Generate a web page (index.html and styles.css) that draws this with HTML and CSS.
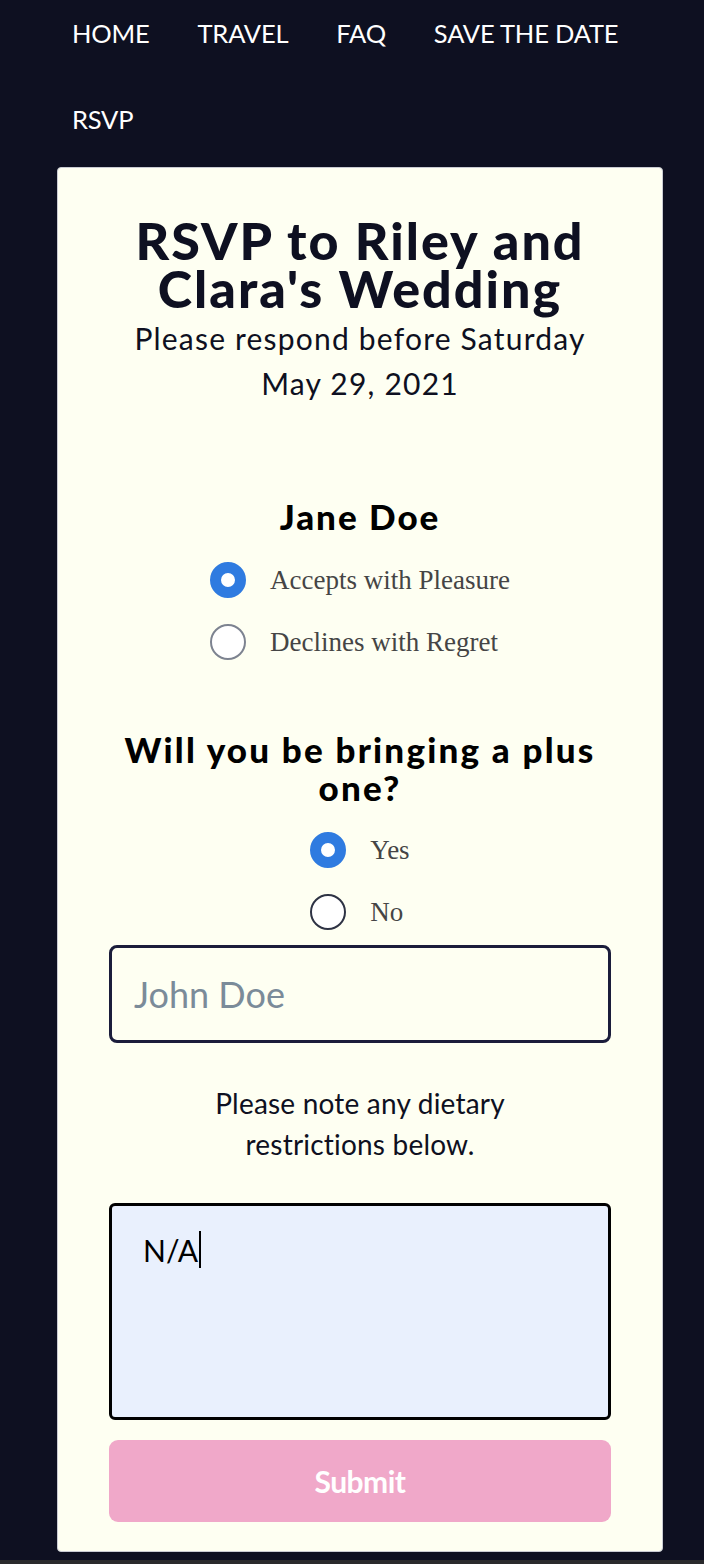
FILE: index.html
```html
<!DOCTYPE html>
<html>
<head>
<meta charset="utf-8">
<link rel="stylesheet" href="styles.css">
</head>
<body>
<nav class="nav">
  <ul class="nav-list">
    <li><a href="#">HOME</a></li>
    <li><a href="#">TRAVEL</a></li>
    <li><a href="#">FAQ</a></li>
    <li><a href="#">SAVE THE DATE</a></li>
    <li><a href="#">RSVP</a></li>
  </ul>
</nav>
<main class="card">
  <h1 class="title">RSVP to Riley and Clara's Wedding</h1>
  <p class="subtitle">Please respond before Saturday May 29, 2021</p>

  <section class="guest">
    <h2 class="guest-name">Jane Doe</h2>
    <div class="options">
      <label class="option"><input type="radio" name="jane" class="radio" checked><span class="opt-text">Accepts with Pleasure</span></label>
      <label class="option"><input type="radio" name="jane" class="radio radio-gray"><span class="opt-text">Declines with Regret</span></label>
    </div>
  </section>

  <section class="guest plus">
    <h2 class="question">Will you be bringing a plus one?</h2>
    <div class="options">
      <label class="option"><input type="radio" name="plus" class="radio" checked><span class="opt-text">Yes</span></label>
      <label class="option"><input type="radio" name="plus" class="radio radio-dark"><span class="opt-text">No</span></label>
    </div>
  </section>

  <input type="text" class="text-input" placeholder="John Doe">

  <p class="diet-label">Please note any dietary restrictions below.</p>

  <div class="textarea"><span class="ta-text">N/A</span><span class="caret"></span></div>

  <button class="submit" type="button">Submit</button>
</main>
</body>
</html>
```
FILE: styles.css
```css
html {
  background: #2a2a2c;
}
body {
  margin: 0;
  background: #0e1021;
  font-family: Lato, "Liberation Sans", sans-serif;
  padding-bottom: 8px;
}
.nav-list {
  list-style: none;
  margin: 0;
  padding: 0 0 0 48px;
  display: flex;
  flex-wrap: wrap;
  row-gap: 20px;
}
.nav-list li {
  height: 66px;
  display: flex;
  align-items: center;
}
.nav-list a {
  color: #ffffff;
  text-decoration: none;
  font-size: 25.5px;
  padding: 0 24px;
  letter-spacing: -0.2px;
}
.card {
  margin: 15px 41px 0 57px;
  background: #fefff2;
  border: 1px solid #c9cbd2;
  border-radius: 4px;
  padding: 48px 51px 29px;
  display: flex;
  flex-direction: column;
  align-items: stretch;
  text-align: center;
  color: #0e1021;
}
.title {
  margin: 0;
  font-size: 52px;
  line-height: 48px;
  font-weight: 900;
  letter-spacing: 2px;
}
.subtitle {
  margin: 4px 0 0;
  font-size: 30px;
  line-height: 45px;
  letter-spacing: 1.2px;
}
.guest {
  margin-top: 90px;
  display: flex;
  flex-direction: column;
  align-items: center;
}
.guest-name, .question {
  margin: 0;
  color: #000;
  font-weight: 900;
}
.guest-name {
  font-size: 35px;
  line-height: 40px;
  letter-spacing: 2px;
  margin-bottom: 26px;
}
.question {
  font-size: 35px;
  line-height: 38px;
  letter-spacing: 2.2px;
  margin-bottom: 26px;
}
.plus {
  margin-top: 70px;
}
.options {
  display: flex;
  flex-direction: column;
  align-items: flex-start;
  gap: 26px;
}
.option {
  display: flex;
  align-items: center;
  gap: 24px;
  height: 36px;
}
.radio {
  appearance: none;
  -webkit-appearance: none;
  margin: 0;
  width: 36px;
  height: 36px;
  border-radius: 50%;
  border: 2px solid #7d8390;
  background: #ffffff;
  box-sizing: border-box;
}
.radio:checked {
  border: 11px solid #2f7be0;
  background: #ffffff;
}
.radio-dark {
  border-color: #2e3344;
}
.opt-text {
  font-family: "Liberation Serif", serif;
  font-size: 27px;
  color: #454545;
}
.text-input {
  margin-top: 15px;
  height: 98px;
  box-sizing: border-box;
  border: 3px solid #1b1d3b;
  border-radius: 8px;
  background: #fefff2;
  padding: 0 22px;
  font-family: Lato, "Liberation Sans", sans-serif;
  font-size: 36px;
  color: #0e1021;
  outline: none;
}
.text-input::placeholder {
  color: #7b8b99;
}
.diet-label {
  margin: 40px auto 0;
  max-width: 330px;
  font-size: 28px;
  line-height: 41px;
  letter-spacing: 0.2px;
  color: #0e1021;
}
.textarea {
  margin-top: 38px;
  height: 217px;
  box-sizing: border-box;
  border: 3px solid #000;
  border-radius: 6px;
  background: #e9f0fd;
  padding: 25px 31px;
  text-align: left;
  display: flex;
  align-items: flex-start;
}
.ta-text {
  font-size: 30px;
  line-height: 38px;
  color: #000;
}
.caret {
  display: inline-block;
  width: 2px;
  height: 37px;
  background: #000;
  margin-left: 1px;
}
.submit {
  margin-top: 20px;
  height: 82px;
  border: none;
  border-radius: 9px;
  background: #f0a8c9;
  color: #ffffff;
  font-family: Lato, "Liberation Sans", sans-serif;
  font-size: 30px;
  font-weight: 700;
  letter-spacing: -0.5px;
}
```
